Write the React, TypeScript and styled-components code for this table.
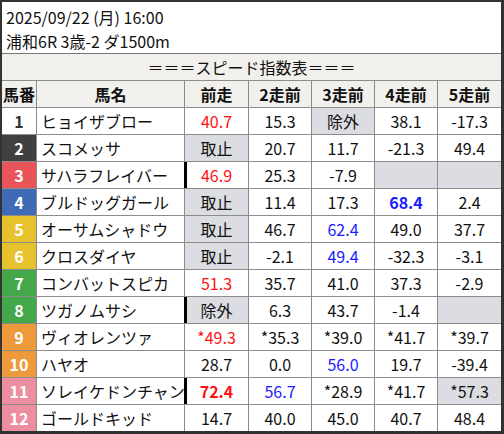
import { createGlobalStyle, styled } from "styled-components";

const GlobalStyle = createGlobalStyle`
  html, body {
    margin: 0;
    padding: 0;
    background: #fff;
  }
  body {
    font-family: "Noto Sans CJK JP", "Noto Sans", sans-serif;
    color: #111;
  }
`;

const COLS = "35px 148px 64px 63px 63px 63px 63px";
const LINE = "#8c8c8c";

const Board = styled.div`
  box-sizing: border-box;
  width: 504px;
  height: 434px;
  border-style: solid;
  border-color: #333;
  border-width: 2px 3px 3px 2px;
  overflow: hidden;
`;

const Info = styled.div`
  box-sizing: border-box;
  height: 52px;
  padding: 3px 4px 0;
  font-size: 16px;
  line-height: 24px;
  border-bottom: 1px solid #777;
`;

const Title = styled.div`
  box-sizing: border-box;
  height: 27px;
  line-height: 26px;
  text-align: center;
  font-size: 16px;
  background: #f1f0ec;
  border-bottom: 1px solid ${LINE};
`;

const Row = styled.div<{ $head?: boolean; $last?: boolean }>`
  box-sizing: border-box;
  display: grid;
  grid-template-columns: ${COLS};
  height: 27px;
  border-bottom: ${(p) => (p.$last ? "none" : `1px solid ${LINE}`)};
  background: ${(p) => (p.$head ? "#f1f0ec" : "#fff")};
  font-size: 16px;
  line-height: 26px;
  font-weight: ${(p) => (p.$head ? 700 : 400)};
`;

const Cell = styled.div<{ $bg?: string; $color?: string; $bold?: boolean; $mark?: boolean }>`
  box-sizing: border-box;
  border-right: 1px solid ${LINE};
  text-align: center;
  white-space: nowrap;
  overflow: hidden;
  background: ${(p) => p.$bg || "transparent"};
  color: ${(p) => p.$color || "#111"};
  font-weight: ${(p) => (p.$bold ? 700 : "inherit")};
  box-shadow: ${(p) => (p.$mark ? "-1px 0 0 #000, inset 2px 0 0 #000" : "none")};
  &:last-child {
    border-right: none;
  }
`;

const NoCell = styled(Cell)<{ $frame: string; $ink: string }>`
  background: ${(p) => p.$frame};
  color: ${(p) => p.$ink};
  font-weight: 700;
`;

const NameCell = styled(Cell)`
  text-align: left;
  padding-left: 4px;
`;

type Val = string | { v: string; c?: "red" | "blue"; bold?: boolean; bg?: boolean };

const FRAMES: Record<number, string> = {
  1: "#ffffff",
  2: "#404040",
  3: "#e8545a",
  4: "#3e6ab6",
  5: "#e6c22e",
  6: "#e6c22e",
  7: "#44a84a",
  8: "#44a84a",
  9: "#ee9a3c",
  10: "#ee9a3c",
  11: "#ec8ea0",
  12: "#ec8ea0",
};

const horses: { no: number; name: string; mark?: boolean; vals: Val[] }[] = [
  { no: 1, name: "ヒョイザブロー", vals: [{ v: "40.7", c: "red" }, "15.3", { v: "除外", bg: true }, "38.1", "-17.3"] },
  { no: 2, name: "スコメッサ", vals: [{ v: "取止", bg: true }, "20.7", "11.7", "-21.3", "49.4"] },
  { no: 3, name: "サハラフレイバー", mark: true, vals: [{ v: "46.9", c: "red" }, "25.3", "-7.9", { v: "", bg: true }, { v: "", bg: true }] },
  { no: 4, name: "ブルドッグガール", vals: [{ v: "取止", bg: true }, "11.4", "17.3", { v: "68.4", c: "blue", bold: true }, "2.4"] },
  { no: 5, name: "オーサムシャドウ", vals: [{ v: "取止", bg: true }, "46.7", { v: "62.4", c: "blue" }, "49.0", "37.7"] },
  { no: 6, name: "クロスダイヤ", vals: [{ v: "取止", bg: true }, "-2.1", { v: "49.4", c: "blue" }, "-32.3", "-3.1"] },
  { no: 7, name: "コンバットスピカ", vals: [{ v: "51.3", c: "red" }, "35.7", "41.0", "37.3", "-2.9"] },
  { no: 8, name: "ツガノムサシ", mark: true, vals: [{ v: "除外", bg: true }, "6.3", "43.7", "-1.4", { v: "", bg: true }] },
  { no: 9, name: "ヴィオレンツァ", vals: [{ v: "*49.3", c: "red" }, "*35.3", "*39.0", "*41.7", "*39.7"] },
  { no: 10, name: "ハヤオ", vals: ["28.7", "0.0", { v: "56.0", c: "blue" }, "19.7", "-39.4"] },
  { no: 11, name: "ソレイケドンチャン", mark: true, vals: [{ v: "72.4", c: "red", bold: true }, { v: "56.7", c: "blue" }, "*28.9", "*41.7", { v: "*57.3", bg: true }] },
  { no: 12, name: "ゴールドキッド", vals: ["14.7", "40.0", "45.0", "40.7", "48.4"] },
];

const INK = { red: "#ff1010", blue: "#1a1aff" };

const App = () => {
  return (
    <>
      <GlobalStyle />
      <Board>
        <Info>
          <div>2025/09/22 (月) 16:00</div>
          <div>浦和6R 3歳-2 ダ1500m</div>
        </Info>
        <Title>＝＝＝スピード指数表＝＝＝</Title>
        <Row $head>
          {["馬番", "馬名", "前走", "2走前", "3走前", "4走前", "5走前"].map((h) => (
            <Cell key={h}>{h}</Cell>
          ))}
        </Row>
        {horses.map((h, i) => (
          <Row key={h.no} $last={i === horses.length - 1}>
            <NoCell $frame={FRAMES[h.no]} $ink={h.no === 1 ? "#333" : "#fff"}>
              {h.no}
            </NoCell>
            <NameCell>{h.name}</NameCell>
            {h.vals.map((val, j) => {
              const o = typeof val === "string" ? { v: val } : val;
              return (
                <Cell
                  key={j}
                  $bg={o.bg ? "#dcdde2" : undefined}
                  $color={o.c ? INK[o.c] : undefined}
                  $bold={o.bold}
                  $mark={j === 0 && h.mark}
                >
                  {o.v}
                </Cell>
              );
            })}
          </Row>
        ))}
      </Board>
    </>
  );
};

export default App;
